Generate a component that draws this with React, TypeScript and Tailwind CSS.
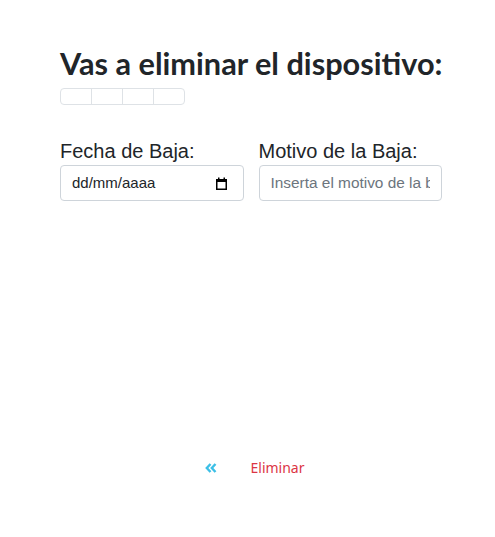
const CalendarGlyph = () => (
  <svg width="11" height="13" viewBox="0 0 11 13" className="text-black">
    <rect x="0.75" y="2.75" width="9.5" height="9.5" fill="none" stroke="currentColor" strokeWidth="1.5" />
    <rect x="0" y="2" width="11" height="3" fill="currentColor" />
    <rect x="2" y="0.5" width="1.5" height="2" fill="currentColor" />
    <rect x="7.5" y="0.5" width="1.5" height="2" fill="currentColor" />
  </svg>
);

const DoubleAngleLeft = () => (
  <svg width="12" height="10" viewBox="0 0 12 10" className="text-[#3cbfe6]">
    <polyline points="5.5,1 1.8,5 5.5,9" fill="none" stroke="currentColor" strokeWidth="2.4" strokeLinejoin="miter" />
    <polyline points="10.5,1 6.8,5 10.5,9" fill="none" stroke="currentColor" strokeWidth="2.4" strokeLinejoin="miter" />
  </svg>
);

const App = () => {
  return (
    <div className="w-[495px] h-[537px] bg-white font-['Noto_Sans',sans-serif] text-[#212529]">
      <div className="ml-[60px] w-[382px] pt-[45px]">
        {/* Heading */}
        <h2 className="whitespace-nowrap font-['Lato',sans-serif] text-[30.7px] font-bold leading-[37px]">
          Vas a eliminar el dispositivo:
        </h2>

        {/* Empty detail cells */}
        <div className="mt-[6px] flex w-[125px] h-[17px] rounded-[4px] border border-[#dee2e6]">
          <div className="flex-1 border-r border-[#dee2e6]" />
          <div className="flex-1 border-r border-[#dee2e6]" />
          <div className="flex-1 border-r border-[#dee2e6]" />
          <div className="flex-1" />
        </div>

        {/* Form */}
        <div className="mt-[34px] grid grid-cols-2 gap-[15px] font-['Liberation_Sans',sans-serif]">
          <div className="flex flex-col">
            <label className="text-[20px] leading-[24px] mb-[2px]">Fecha de Baja:</label>
            <div className="flex h-[36px] w-full items-center justify-between rounded-[4px] border border-[#ced4da] pl-[11px] pr-[16px] text-[15px] text-[#212529]">
              <span>dd/mm/aaaa</span>
              <CalendarGlyph />
            </div>
          </div>
          <div className="flex flex-col">
            <label className="text-[20px] leading-[24px] mb-[2px]">Motivo de la Baja:</label>
            <input
              type="text"
              placeholder="Inserta el motivo de la baja"
              className="h-[36px] w-full rounded-[4px] border border-[#ced4da] px-[11px] text-[15.4px] placeholder:text-[#6c757d]"
            />
          </div>
        </div>
      </div>

      {/* Footer actions */}
      <div className="mt-[256px] flex items-center justify-center gap-[34px] pl-[14px]">
        <button>
          <DoubleAngleLeft />
        </button>
        <button className="text-[14px] text-[#dc3545]">Eliminar</button>
      </div>
    </div>
  );
};

export default App;
